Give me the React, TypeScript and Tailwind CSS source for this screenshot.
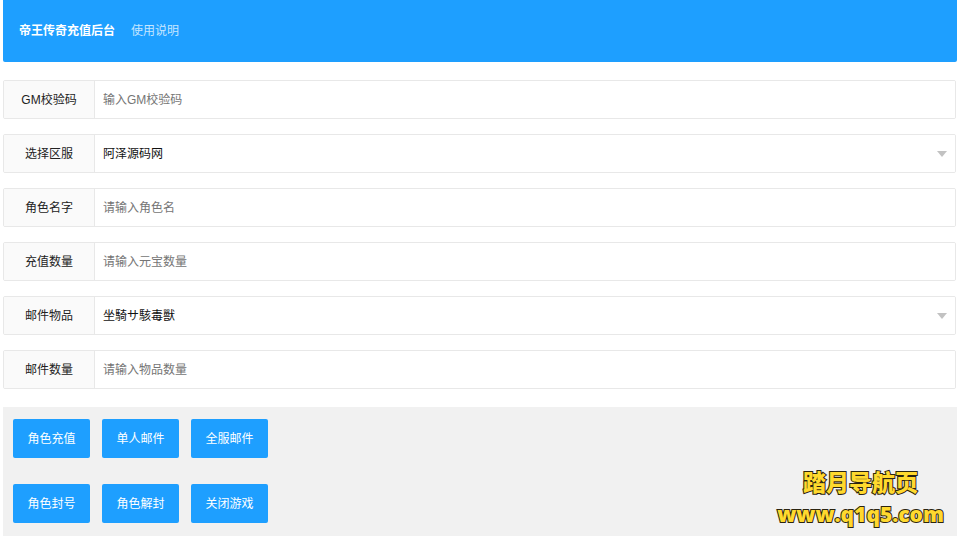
import type { ReactNode } from 'react'

interface Field {
  id: string
  label: string
  placeholder?: string
  options?: string[]
}

const FIELDS: Field[] = [
  { id: 'gm-code', label: 'GM校验码', placeholder: '输入GM校验码' },
  { id: 'server', label: '选择区服', options: ['阿泽源码网'] },
  { id: 'role', label: '角色名字', placeholder: '请输入角色名' },
  { id: 'amount', label: '充值数量', placeholder: '请输入元宝数量' },
  { id: 'item', label: '邮件物品', options: ['坐騎サ駭毒獸'] },
  { id: 'item-count', label: '邮件数量', placeholder: '请输入物品数量' },
]

const ACTIONS = [
  ['角色充值', '单人邮件', '全服邮件'],
  ['角色封号', '角色解封', '关闭游戏'],
]

export default function App() {
  return (
    <div className="relative bg-white pr-[3px] pl-[3px] font-['Liberation_Sans','Noto_Sans_CJK_SC',sans-serif] text-[12px] text-[#222]">
      <header className="flex h-[62px] items-center gap-4 rounded-b-xs bg-[#1e9fff] px-4 text-white">
        <h1 className="font-bold">帝王传奇充值后台</h1>
        <nav>
          <a href="#help" className="text-white/75 hover:text-white">
            使用说明
          </a>
        </nav>
      </header>

      <form onSubmit={(e) => e.preventDefault()}>
        <div className="flex flex-col gap-[15px] pt-[18px] pr-px pb-[18px]">
          {FIELDS.map((field) => (
            <FieldRow key={field.id} field={field} />
          ))}
        </div>

        <div className="flex flex-col gap-[26px] bg-[#f1f1f1] px-[10px] pt-3 pb-[13px]">
          {ACTIONS.map((row) => (
            <div key={row[0]} className="flex gap-3">
              {row.map((text) => (
                <ActionButton key={text}>{text}</ActionButton>
              ))}
            </div>
          ))}
        </div>
      </form>

      <Watermark />
    </div>
  )
}

function FieldRow({ field }: { field: Field }) {
  const { id, label, placeholder, options } = field
  return (
    <div className="flex h-[39px] overflow-hidden rounded-xs border border-[#e8e8e8]">
      <label
        htmlFor={id}
        className="flex w-[91px] shrink-0 items-center justify-center border-r border-[#e8e8e8] bg-[#fafafa]"
      >
        {label}
      </label>
      {options ? (
        <div className="relative flex flex-1">
          <select id={id} className="w-full appearance-none bg-white px-2 pt-px text-[#111] outline-none">
            {options.map((option) => (
              <option key={option}>{option}</option>
            ))}
          </select>
          <svg
            viewBox="0 0 10 6"
            className="pointer-events-none absolute top-4 right-2 h-1.5 w-2.5 fill-[#c2c2c2]"
            aria-hidden
          >
            <path d="M0 0h10L5 6z" />
          </svg>
        </div>
      ) : (
        <input
          id={id}
          type="text"
          placeholder={placeholder}
          className="min-w-0 flex-1 bg-white px-2 outline-none placeholder:text-[#757575]"
        />
      )}
    </div>
  )
}

function ActionButton({ children }: { children: ReactNode }) {
  return (
    <button type="button" className="h-[39px] w-[77px] rounded-xs bg-[#1e9fff] text-white hover:opacity-80">
      {children}
    </button>
  )
}

/** Outlined site mark floating over the bottom right corner. */
function Watermark() {
  return (
    <div className="pointer-events-none absolute right-4 bottom-1.5 flex flex-col items-center font-['Open_Sans','Noto_Sans_CJK_SC',sans-serif] font-black text-[#ffd92e] [-webkit-text-stroke:2px_#2b2410] [paint-order:stroke_fill]">
      <span className="text-[23px] leading-8">踏月导航页</span>
      <span className="text-[21px] leading-8">www.q1q5.com</span>
    </div>
  )
}
